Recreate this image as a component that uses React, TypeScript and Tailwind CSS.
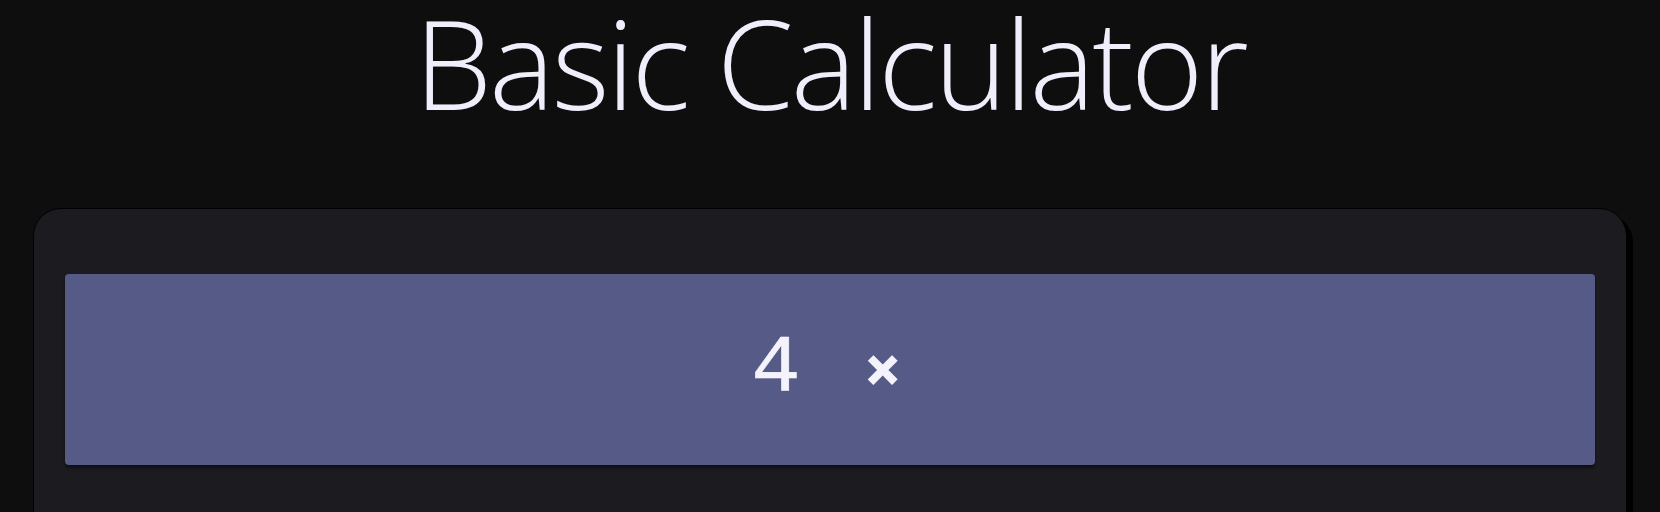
export default function App() {
  return (
    <div className="min-h-screen bg-[#0e0e0f] px-[33px] pb-10">
      <h1 className="text-center font-['Open_Sans',sans-serif] text-[124px] font-light leading-none tracking-[-3px] text-[#f0eefa]">
        Basic Calculator
      </h1>

      <div className="mt-[84px] h-[400px] rounded-[28px] border border-black bg-[#1c1c20] px-[31px] pt-[65px] shadow-[6px_6px_0_#000]">
        <div className="flex h-[191px] items-center justify-center rounded-[4px] bg-[#555a86] pr-[10px] shadow-[0_3px_3px_rgba(0,0,0,0.45)]">
          <span className="font-['Liberation_Mono',monospace] text-[82px] leading-none text-[#f4f3fb] [-webkit-text-stroke:0.6px_#f4f3fb]">
            4
          </span>
          <span className="ml-[66px] mt-[8px] font-['Liberation_Mono',monospace] text-[54px] font-bold leading-none text-[#f4f3fb] [-webkit-text-stroke:2px_#f4f3fb]">
            ×
          </span>
        </div>
      </div>
    </div>
  );
}
